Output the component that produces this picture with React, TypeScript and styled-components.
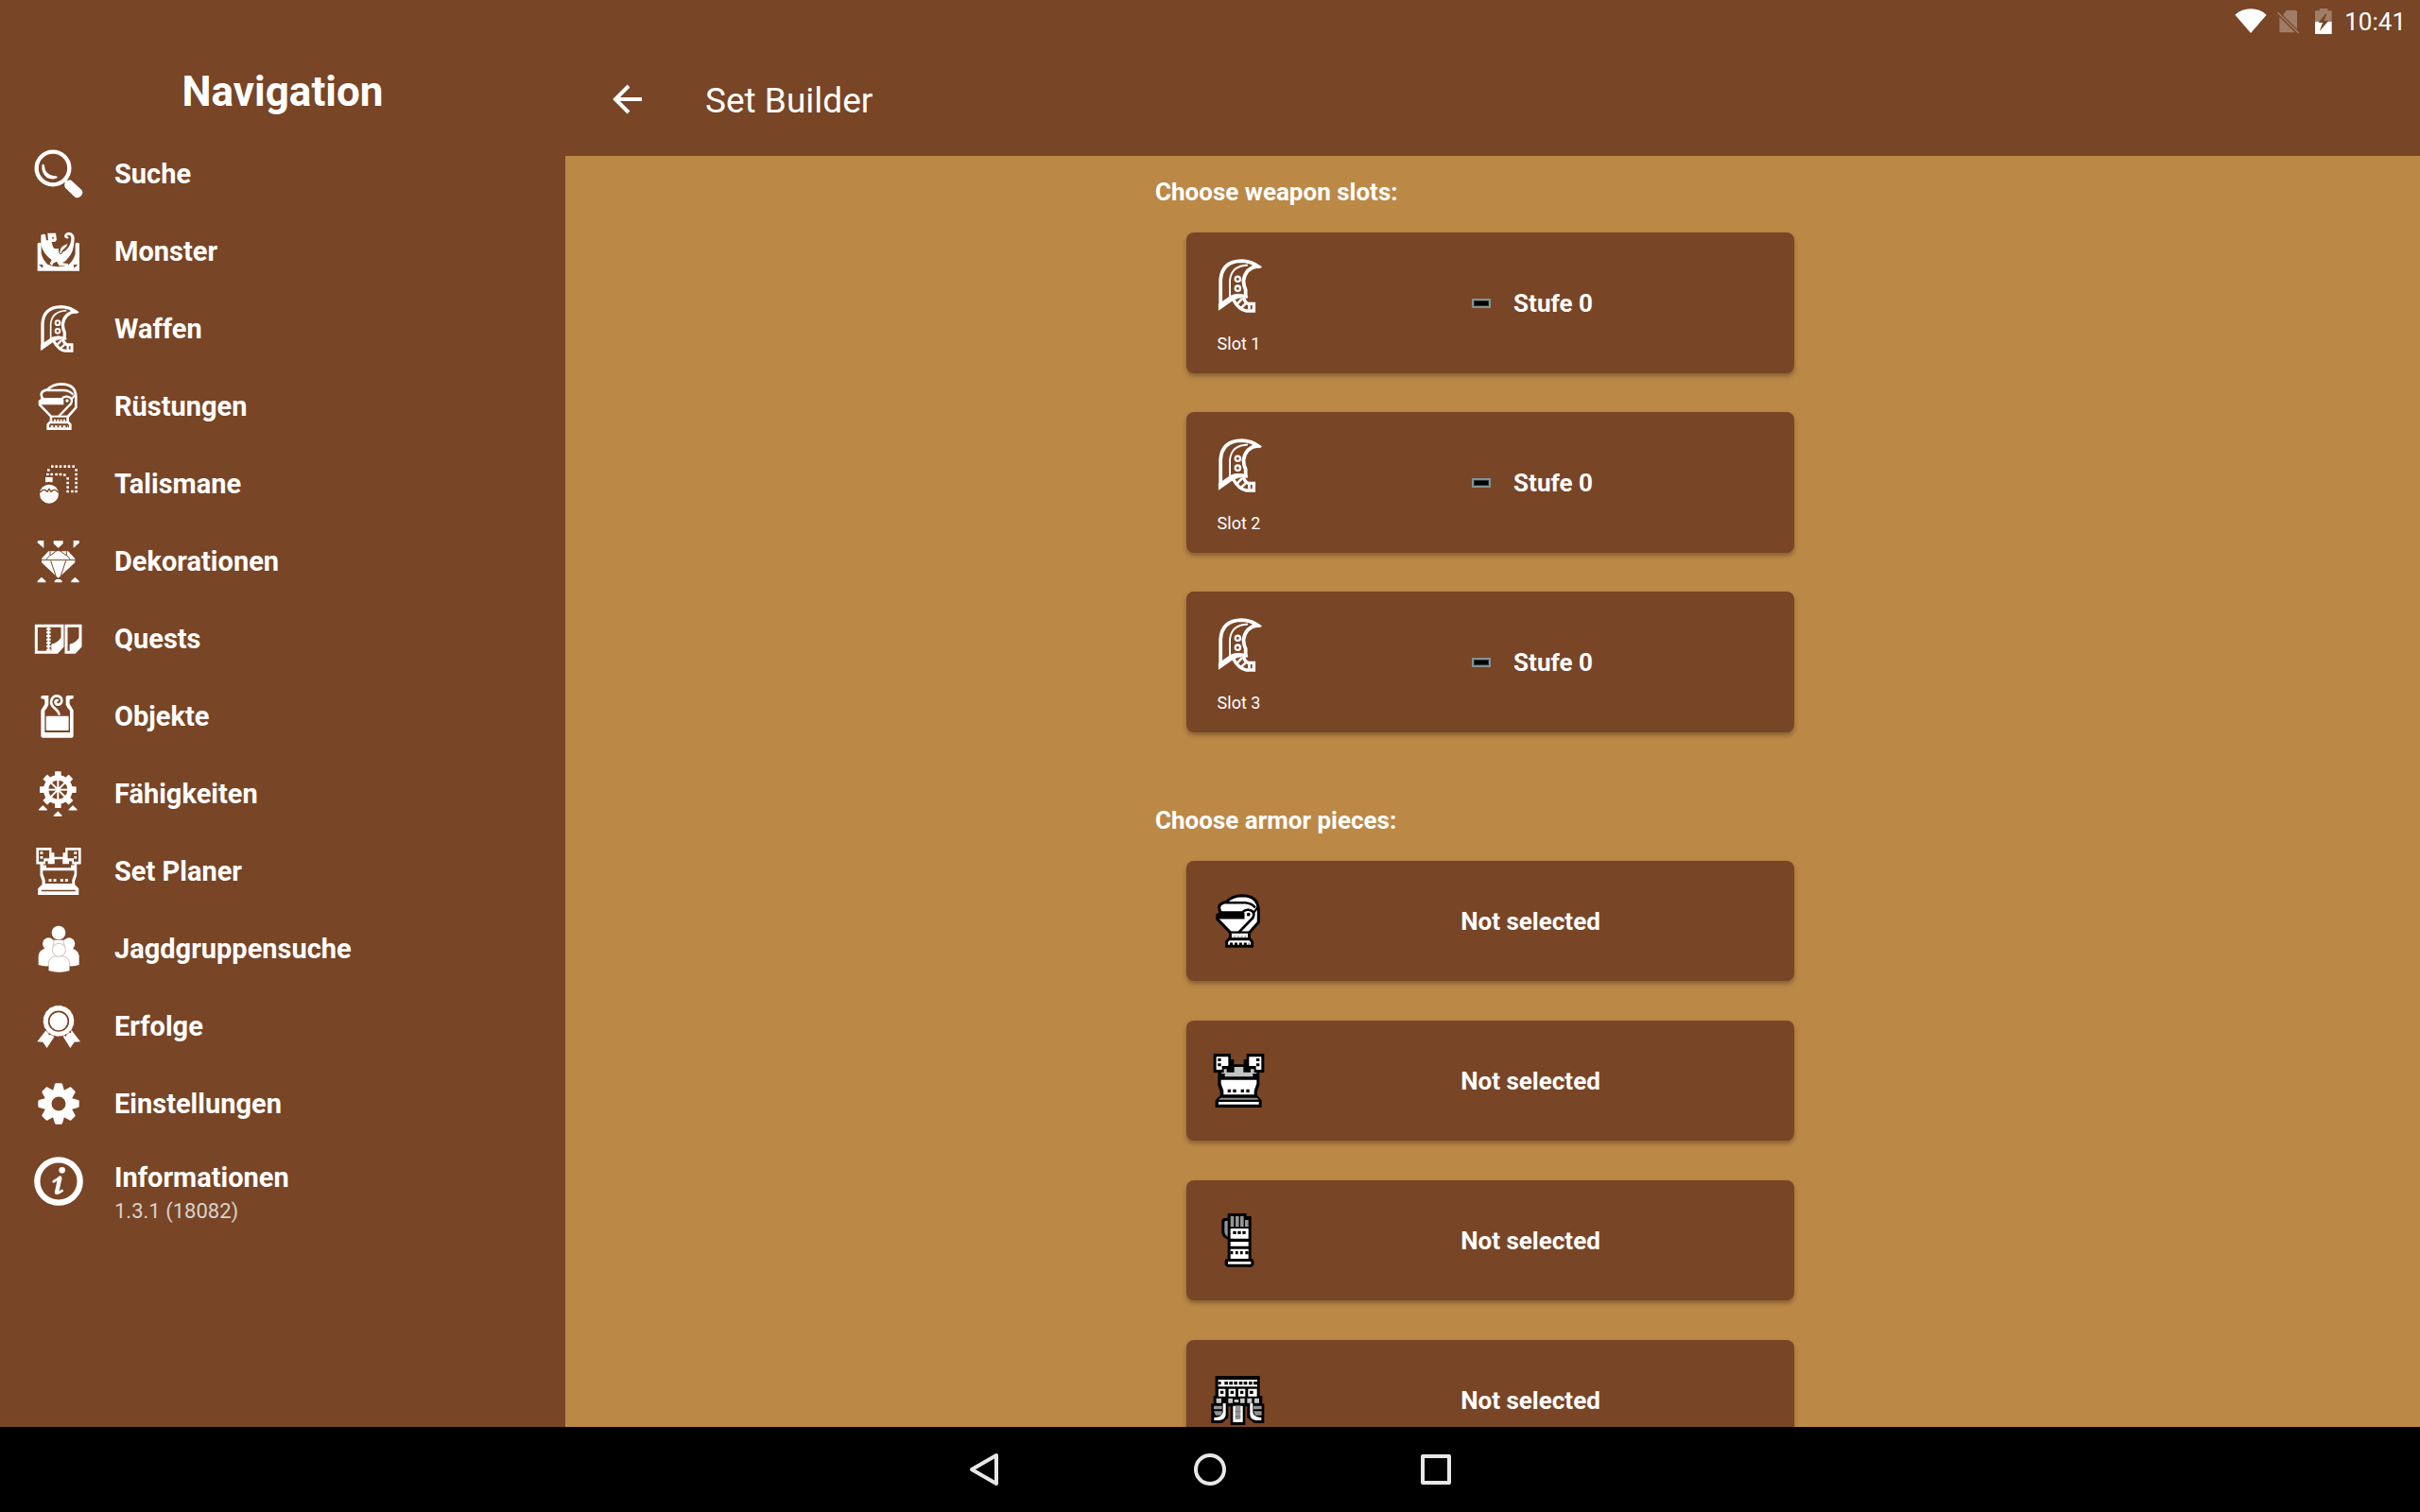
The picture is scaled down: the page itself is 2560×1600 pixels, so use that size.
import React from "react";
import styled, { createGlobalStyle } from "styled-components";

const BROWN = "#784526";
const GOLD = "#bc8846";

const GlobalStyle = createGlobalStyle`
  * { box-sizing: border-box; }
  body { margin: 0; background: ${BROWN}; font-family: Roboto, "Noto Sans", sans-serif; color: #fff; }
  button { font: inherit; color: inherit; border: 0; padding: 0; background: none; cursor: pointer; }
`;

const Screen = styled.div`
  display: flex;
  flex-direction: column;
  height: 100vh;
  background: ${BROWN};
`;

const StatusBar = styled.header`
  display: flex;
  flex: none;
  align-items: center;
  justify-content: flex-end;
  gap: 11px;
  height: 48px;
  padding: 0 15px 3px 0;
  font-size: 26px;
  line-height: 32px;

  svg { display: block; }
`;

const Body = styled.div`
  display: flex;
  flex: 1;
  min-height: 0;
`;

const Sidebar = styled.nav`
  flex: none;
  width: 598px;
`;

const SidebarTitle = styled.h1`
  margin: 0;
  padding-top: 3px;
  font-size: 44px;
  font-weight: 700;
  line-height: 92px;
  text-align: center;
`;

const MenuList = styled.ul`
  margin: 0;
  padding: 0;
  list-style: none;
`;

const MenuLink = styled.a`
  display: flex;
  align-items: center;
  gap: 33px;
  height: 82px;
  padding-left: 36px;
  color: #fff;
  text-decoration: none;
`;

const MenuText = styled.span<{ $top?: boolean }>`
  align-self: ${(p) => (p.$top ? "flex-start" : "center")};
  padding-top: ${(p) => (p.$top ? "19px" : "0")};
  font-size: 29px;
  font-weight: 700;
  line-height: 36px;
`;

const Version = styled.small`
  display: block;
  font-size: 22px;
  font-weight: 400;
  line-height: 36px;
  color: #d8d2ce;
`;

const Main = styled.main`
  display: flex;
  flex: 1;
  flex-direction: column;
  min-width: 0;
`;

const AppBar = styled.div`
  display: flex;
  flex: none;
  align-items: center;
  height: 117px;
  padding-left: 42px;
`;

const BackButton = styled.button`
  display: grid;
  place-items: center;
  width: 48px;
  height: 48px;
  margin-right: 58px;
`;

const AppTitle = styled.h2`
  margin: 0;
  font-size: 37px;
  font-weight: 400;
  line-height: 48px;
`;

const Content = styled.div`
  flex: 1;
  min-height: 0;
  overflow: hidden;
  background: ${GOLD};
`;

const Column = styled.div`
  display: flex;
  flex-direction: column;
  gap: 76px;
  width: 714px;
  margin: 0 auto;
  padding-top: 21px;
`;

const SectionTitle = styled.h3`
  margin: 0 0 26px;
  font-size: 26px;
  font-weight: 700;
  line-height: 34px;
`;

const CardList = styled.div<{ $gap: number }>`
  display: flex;
  flex-direction: column;
  gap: ${(p) => p.$gap}px;
  padding: 0 38px 0 33px;
`;

const Card = styled.button<{ $height: number }>`
  display: flex;
  align-items: center;
  height: ${(p) => p.$height}px;
  padding-left: 26px;
  border-radius: 8px;
  background: ${BROWN};
  box-shadow: 0 3px 5px rgba(0, 0, 0, 0.3);
`;

const CardIcon = styled.span`
  display: flex;
  flex: none;
  flex-direction: column;
  align-items: center;
  gap: 18px;
  width: 59px;

  svg { display: block; }
`;

const WeaponIcon = styled(CardIcon)`
  margin-right: 4px;
  padding-top: 10px;
`;

const SlotName = styled.span`
  font-size: 18px;
  line-height: 28px;
`;

const CardValue = styled.span`
  display: flex;
  flex: 1;
  align-items: center;
  justify-content: center;
  gap: 24px;
  font-size: 26px;
  font-weight: 700;
  line-height: 34px;
`;

const EmptySlot = styled.i`
  width: 20px;
  height: 10px;
  border: 2px solid #87918f;
  background: #000;
  box-shadow: inset 0 0 0 1px #27363a;
`;

const SystemBar = styled.footer`
  display: flex;
  flex: none;
  align-items: center;
  justify-content: center;
  gap: 159px;
  height: 90px;
  background: #000;
`;

const SystemButton = styled.button`
  display: grid;
  place-items: center;
  width: 80px;
  height: 80px;
`;

type IconProps = { size?: number; line?: string; fill?: string };

const SearchIcon = ({ size = 52 }: IconProps) => (
  <svg width={size} height={size} viewBox="109 354 156 156" fill="#fff">
    <circle cx="169" cy="414" r="52" fill="none" stroke="#fff" strokeWidth="13" />
    <path d="M134 405q4-7 8 0q1 31 36 34q10 3 1 7q-15 6-30-3q-17-13-15-38z" />
    <path d="M213 458l-10-10M226 470l21 22" stroke="#fff" strokeWidth="9" fill="none" />
    <path d="M206 464q0-6 7-11q8-3 14-1l33 31q7 9-1 18q-9 10-20 5l-31-30q-4-7-2-12z" />
  </svg>
);

const MonsterIcon = ({ size = 52 }: IconProps) => (
  <svg width={size} height={size} viewBox="109 600 156 156" fill="#fff">
    <path d="M120 653q6-5 12 0v32q4 20 20 34q34 15 68 0q16-14 20-34v-32q6-5 13 0v87H120z" />
    <path d="M124 720h13v11zM248 720h-13v11z" fill={BROWN} />
    <path d="M131 627q8-6 14-2l3 18h6l-2-23h26l3 22-6 6h-10l4 16q6 8 12 5h6q-2 12 6 13q20-4 30-26q6-16 3-26q-8-8-13 0q6 0 6 6q-12 4-14-6q2-12 14-13q16 2 18 16q0 44-18 64q-8 12-20 18l18 2v7h-28l-8-14-12 6-2 8-8-7 6-12q-26-18-34-48z" />
    <path d="M190 684q-2-18 14-26q8-5 14-6q-4 12-12 18q-8 4-10 16z" stroke={BROWN} strokeWidth="3" />
    <circle cx="169" cy="635" r="3" fill={BROWN} />
  </svg>
);

const BladeIcon = ({ size = 52 }: IconProps) => (
  <svg width={size} height={size} viewBox="109 846 156 156" fill="none" stroke="#fff">
    <path d="M136 983V908Q139 855 195 854Q222 855 240 869Q205 874 200 910Q201 926 206 935V955" strokeWidth="10" />
    <path d="M222 855L249 870 247 874H228z" fill="#fff" strokeWidth="2" />
    <path d="M162 956V908Q166 868 212 866" strokeWidth="5" />
    <path d="M131 992V975L166 951Q186 943 211 952V958Q190 953 172 963Z" fill="#fff" strokeWidth="2" />
    <path d="M171 962Q187 991 208 994H229V974H213Q203 970 200 956" strokeWidth="9" />
    <path d="M181 976L196 960M193 986L208 972M216 974V990" strokeWidth="7" />
    <circle cx="184" cy="905" r="7" strokeWidth="6" />
    <circle cx="184" cy="931" r="7" strokeWidth="6" />
  </svg>
);

const HelmIcon = ({ size = 52, line = "#fff", fill = BROWN }: IconProps) => (
  <svg width={size} height={size} viewBox="109 72 156 156" fill="none" stroke={line} strokeWidth="8">
    <path
      d="M127 134V145L163 182V202H216V183L242 154V118Q240 79 195 79Q168 80 151 97Q132 101 132 112Q132 120 137 127Z"
      fill={fill}
    />
    <path d="M150 99H205Q224 101 233 113" strokeWidth="7" />
    <path d="M131 123H198L203 129V145H127V133H131z" fill={line} stroke="none" />
    <path d="M198 125Q204 118 214 119Q229 121 229 133Q228 142 221 147L186 183" strokeWidth="7" />
    <path d="M228 128L240 112" strokeWidth="6" />
    <circle cx="214" cy="132" r="5" fill={line} stroke="none" />
    <path d="M165 182H216" strokeWidth="6" />
    <path d="M172 194H208" stroke={fill === "#fff" ? "#bbb" : line} strokeWidth="6" strokeDasharray="6 4" />
    <path d="M153 221V208L159 201H218L224 208V221Z" fill={fill} />
    <path d="M162 214H216" strokeWidth="7" strokeDasharray="8 5" />
  </svg>
);

const TALISMAN_BEADS = [
  [167, 341], [180, 341], [193, 341], [207, 341], [220, 341], [234, 341], [155, 352],
  [243, 352], [243, 366], [243, 380], [243, 393], [243, 407], [243, 420],
  [152, 366], [165, 366], [180, 366], [193, 366], [206, 368],
  [216, 379], [216, 393], [216, 407], [216, 420], [230, 420],
];

const TalismanIcon = ({ size = 52 }: IconProps) => (
  <svg width={size} height={size} viewBox="109 318 156 156" fill="#fff">
    {TALISMAN_BEADS.map(([x, y]) => (
      <rect key={`${x}-${y}`} x={x - 4} y={y - 4} width="8" height="8" rx="2" />
    ))}
    <path d="M145 375h23v16h-6q-5-4-10 0h-7z" />
    <circle cx="157" cy="428" r="30" />
    <path d="M128 424q8-12 16-8l7 5 6-9 6 9 7-5q8-4 16 8" fill="none" stroke={BROWN} strokeWidth="4" />
  </svg>
);

const GemIcon = ({ size = 52 }: IconProps) => (
  <svg width={size} height={size} viewBox="109 564 156 156" fill="#fff">
    <path d="M155 610H217L239 633V646L186 695L133 646V633Z" />
    <path
      d="M132 638H240M160 610V622L148 636M212 610V622L224 636M186 604L160 624M186 604L212 624M162 640L178 688M210 640L194 688"
      stroke={BROWN}
      strokeWidth="3"
      fill="none"
    />
    <path d="M171 577h30v9l-15 14-15-14zM120 578l4-2h16v24l-20-17zM253 578l-4-2h-15v24l19-17z" />
    <path d="M120 709v-5l13-12 13 12v5zM227 709v-5l12-12 13 12v5zM174 709v-5l6-5h12l6 5v5z" />
  </svg>
);

const QuestIcon = ({ size = 52 }: IconProps) => (
  <svg width={size} height={size} viewBox="109 810 156 156" fill="none" stroke="#fff" strokeWidth="9">
    <path d="M116 847H199V912L182 931H116ZM211 847H256V912L238 931H211Z" />
    <path d="M155 851V930" strokeWidth="6" />
    <path d="M155 854V930" strokeWidth="14" strokeDasharray="6 5" />
    <path d="M165 906Q185 902 199 880V912L182 931H165ZM223 906Q245 900 256 880V912L238 931H223Z" fill="#fff" strokeWidth="2" />
  </svg>
);

const BottleIcon = ({ size = 52 }: IconProps) => (
  <svg width={size} height={size} viewBox="109 96 156 156" fill="#fff">
    <path d="M131 111l4-3h20v29q-3 9-12 19v69h80v-69q-10-10-13-19v-25l4-4h20v9l-12 4v14l12 20v81q0 6-6 6h-91q-6 0-6-6v-81l12-20v-14l-12-4z" />
    <rect x="147" y="173" width="72" height="46" rx="3" />
    <path d="M188 170Q190 162 174 148Q161 138 164 124Q168 109 182 109Q197 111 197 125Q195 137 184 137Q175 134 177 126Q180 121 186 125" fill="none" stroke="#fff" strokeWidth="8" />
  </svg>
);

const SPOKES = [0, 45, 90, 135, 180, 225, 270, 315];

const SkillIcon = ({ size = 52 }: IconProps) => (
  <svg width={size} height={size} viewBox="109 342 156 156" fill="#fff">
    {SPOKES.map((a) => (
      <rect key={a} x="175" y="349" width="20" height="26" rx="2" transform={`rotate(${a} 185 407)`} />
    ))}
    <circle cx="185" cy="407" r="38" fill="none" stroke="#fff" strokeWidth="16" />
    {SPOKES.map((a) => (
      <rect key={a} x="182" y="374" width="6" height="30" transform={`rotate(${a} 185 407)`} />
    ))}
    <circle cx="185" cy="407" r="7" />
    <path d="M124 473v-4l13-13 14 13v4zM219 473v-4l13-13 14 13v4zM171 492v-4l14-13 13 13v4z" stroke={BROWN} />
  </svg>
);

const ChestIcon = ({ size = 52, line = "#fff", fill = BROWN }: IconProps) => {
  const shade = fill === "#fff" ? "#c4c4c4" : fill;
  return (
    <svg width={size} height={size} viewBox="97 642 177 177" fill={line}>
      <path d="M105 645H160V663H170V679H201V663H210V645H266V705H251V745L244 765V778L258 793V816H111V793L126 778V765L119 745V705H105Z" />
      <path d="M171 687H200V704H223V694H234V705H242V708H230V718H141V708H130V705H138V694H147V704H171Z" fill={shade} />
      <path d="M114 655H152V684H132V696H114ZM257 655H218V684H240V696H257Z" fill={fill} />
      <path d="M119 660h10v9h-10zM119 676h10v9h-10zM241 660h10v9h-10zM241 676h10v9h-10z" />
      <path d="M129 728H242V740L234 762V775H137V762L129 740Z" fill={fill} />
      <path d="M150 758h10v10h-10zM167 758h10v10h-10zM192 758h10v10h-10zM209 758h10v10h-10z" />
      <path d="M128 785H243L249 791H121Z" fill={fill === "#fff" ? "#8c8c8c" : line} />
      <path d={fill === "#fff" ? "M121 798H249V806H121Z" : "M124 798H246V803H124Z"} fill={fill} />
    </svg>
  );
};

const GroupIcon = ({ size = 52 }: IconProps) => (
  <svg width={size} height={size} viewBox="109 834 156 156" fill="#fff">
    <circle cx="187" cy="861" r="22" />
    <rect x="167" y="884" width="40" height="64" />
    <circle cx="155" cy="896" r="19" />
    <circle cx="220" cy="896" r="19" />
    <path d="M123 963V934Q125 914 150 910H224Q249 914 252 934V963Q240 968 220 967H156Q136 968 123 963Z" />
    <path d="M155 982V958Q158 936 180 935H196Q219 936 222 958V982Q190 992 155 982Z" stroke={BROWN} strokeWidth="1" />
    <circle cx="188" cy="916" r="21" stroke={BROWN} strokeWidth="1" />
    <path d="M171 880Q175 893 168 904M203 880Q200 893 207 904" stroke={BROWN} strokeWidth="1" fill="none" />
  </svg>
);

const AwardIcon = ({ size = 52 }: IconProps) => (
  <svg width={size} height={size} viewBox="109 90 156 156" fill="#fff">
    <path d="M149 178L119 217 137 218 150 237 174 200zM226 178L256 217 237 218 224 237 201 200z" />
    <circle cx="187" cy="151" r="50" stroke={BROWN} strokeWidth="2" />
    <circle cx="187" cy="151" r="51" fill="none" stroke={BROWN} strokeWidth="5" strokeDasharray="5 13" />
    <circle cx="187" cy="152" r="31" fill="none" stroke={BROWN} strokeWidth="5" />
  </svg>
);

const SettingsIcon = ({ size = 52 }: IconProps) => (
  <svg width={size} height={size} viewBox="109 336 156 156" fill="#fff">
    {SPOKES.map((a) => (
      <path key={a} d="M168 376L175 352Q176 349 179 349H195Q198 349 199 352L206 376Z" transform={`rotate(${a} 187 414)`} />
    ))}
    <circle cx="187" cy="414" r="34" fill="none" stroke="#fff" strokeWidth="23" />
  </svg>
);

const InfoIcon = ({ size = 52 }: IconProps) => (
  <svg width={size} height={size} viewBox="109 582 156 156" fill="none" stroke="#fff">
    <circle cx="187" cy="660" r="68" strokeWidth="19" />
    <circle cx="198" cy="625" r="10" fill="#fff" stroke="none" />
    <path d="M171 661L192 648Q186 672 180 698Q186 700 198 690" strokeWidth="8" strokeLinecap="round" strokeLinejoin="round" />
    <path d="M191 650L181 695" strokeWidth="13" strokeLinecap="round" />
  </svg>
);

const GauntletIcon = ({ size = 59 }: IconProps) => (
  <svg width={size} height={size} viewBox="97 126 177 177" fill="#000">
    <path d="M150 129H210V138H225V273H229L233 279V292L227 299H148L141 292V279L146 273H150V212Q131 204 131 190V150L137 144H150Z" />
    <path d="M140 155Q142 152 150 152V203Q140 197 140 186ZM159 138h11v34h-11zM175 138h11v34h-11zM190 138h11v34h-11zM205 150h11v22h-11z" fill="#949494" />
    <path d="M159 177H216V209H159ZM159 219H216V233H159ZM159 242H216V273H159ZM151 282H224V290H151Z" fill="#fff" />
    <path d="M167 185h10v10h-10zM182 185h10v10h-10zM197 185h10v10h-10zM159 249h8v10h-8zM175 249h8v10h-8zM190 249h8v10h-8zM206 249h10v10h-10z" />
  </svg>
);

const WaistIcon = ({ size = 59 }: IconProps) => (
  <svg width={size} height={size} viewBox="97 633 177 177" fill="#000">
    <path d="M111 645H252V708H260V733H266V795H235L212 778V742H206V801H159V742H152V778L132 795H98V733H105V708H111Z" />
    <path d="M120 657H244V679H120ZM121 686h22v24h-22zM153 686h22v24h-22zM184 686h22v24h-22zM215 686h28v24h-28z" fill="#fff" />
    <path d="M120 663h9v9h-9zM140 663h11v10h-11zM155 663h11v10h-11zM170 663h11v10h-11zM186 663h11v10h-11zM201 663h11v10h-11zM217 663h11v10h-11zM232 663h12v10h-12z" />
    <path d="M127 692h10v10h-10zM159 692h10v10h-10zM190 692h10v10h-10zM220 692h11v10h-11z" />
    <path d="M114 716h16v15h-16zM152 716h14v15h-14zM171 720h14v9h-14zM190 716h14v15h-14zM212 716h15v15h-15zM235 716h15v15h-15z" fill="#c8c8c8" />
    <path d="M106 740h26v11h-26zM106 757h26v13h-20zM232 740h26v11h-26zM232 757h26v13h-20z" fill="#949494" />
    <path d="M135 732H144V768Q142 784 124 786H107V777Q132 778 135 760ZM221 732H230V760Q232 776 257 777V786H240Q222 784 221 768ZM167 740H198V792H167Z" fill="#fff" />
    <path d="M174 740H191V783H174Z" fill="#949494" />
    <path d="M174 756h17v4h-17zM174 772h17v4h-17z" fill="#777" />
  </svg>
);

const MENU = [
  { label: "Suche", Icon: SearchIcon },
  { label: "Monster", Icon: MonsterIcon },
  { label: "Waffen", Icon: BladeIcon },
  { label: "Rüstungen", Icon: HelmIcon },
  { label: "Talismane", Icon: TalismanIcon },
  { label: "Dekorationen", Icon: GemIcon },
  { label: "Quests", Icon: QuestIcon },
  { label: "Objekte", Icon: BottleIcon },
  { label: "Fähigkeiten", Icon: SkillIcon },
  { label: "Set Planer", Icon: ChestIcon },
  { label: "Jagdgruppensuche", Icon: GroupIcon },
  { label: "Erfolge", Icon: AwardIcon },
  { label: "Einstellungen", Icon: SettingsIcon },
  { label: "Informationen", Icon: InfoIcon, version: "1.3.1 (18082)" },
];

const WEAPON_SLOTS = ["Slot 1", "Slot 2", "Slot 3"];

const ARMOR_PIECES = [
  { id: "head", Icon: HelmIcon },
  { id: "chest", Icon: ChestIcon },
  { id: "arms", Icon: GauntletIcon },
  { id: "waist", Icon: WaistIcon },
];

export default function App() {
  return (
    <Screen>
      <GlobalStyle />
      <StatusBar>
        <svg width="34" height="27" viewBox="69 27 102 81" fill="#fff">
          <path d="M70 47Q92 28 120 28T170 47L120 105Z" />
        </svg>
        <svg width="29" height="27" viewBox="204 27 87 81">
          <path d="M233 33H262Q267 33 267 38V92L222 48ZM211 54L260 103H216Q211 103 211 98Z" fill="#a17d68" />
          <path d="M205 39L272 105" stroke="#a17d68" strokeWidth="5" />
        </svg>
        <svg width="20" height="27" viewBox="325 27 60 81">
          <path d="M325 34H339V27H365V34H378V70H325Z" fill="#fff" opacity="0.3" />
          <path d="M325 69H378V108H325Z" fill="#fff" />
          <path d="M358 44L336 72H349L339 99L368 66H353L362 45Z" fill={BROWN} />
        </svg>
        <time>10:41</time>
      </StatusBar>
      <Body>
        <Sidebar>
          <SidebarTitle>Navigation</SidebarTitle>
          <MenuList>
            {MENU.map(({ label, Icon, version }) => (
              <li key={label}>
                <MenuLink href="#">
                  <Icon />
                  <MenuText $top={Boolean(version)}>
                    {label}
                    {version && <Version>{version}</Version>}
                  </MenuText>
                </MenuLink>
              </li>
            ))}
          </MenuList>
        </Sidebar>
        <Main>
          <AppBar>
            <BackButton aria-label="Back">
              <svg width="32" height="36" viewBox="0 0 32 36" fill="none" stroke="#fff" strokeWidth="4">
                <path d="M31 16H4M17 2L3 16L17 30" />
              </svg>
            </BackButton>
            <AppTitle>Set Builder</AppTitle>
          </AppBar>
          <Content>
            <Column>
              <section>
                <SectionTitle>Choose weapon slots:</SectionTitle>
                <CardList $gap={41}>
                  {WEAPON_SLOTS.map((name) => (
                    <Card key={name} $height={149}>
                      <WeaponIcon>
                        <BladeIcon size={59} />
                        <SlotName>{name}</SlotName>
                      </WeaponIcon>
                      <CardValue>
                        <EmptySlot />
                        Stufe 0
                      </CardValue>
                    </Card>
                  ))}
                </CardList>
              </section>
              <section>
                <SectionTitle>Choose armor pieces:</SectionTitle>
                <CardList $gap={42}>
                  {ARMOR_PIECES.map(({ id, Icon }) => (
                    <Card key={id} $height={127}>
                      <CardIcon>
                        <Icon size={59} line="#000" fill="#fff" />
                      </CardIcon>
                      <CardValue>Not selected</CardValue>
                    </Card>
                  ))}
                </CardList>
              </section>
            </Column>
          </Content>
        </Main>
      </Body>
      <SystemBar>
        <SystemButton aria-label="Back">
          <svg width="36" height="36" viewBox="0 0 36 36" fill="none" stroke="#e8e8e8" strokeWidth="4" strokeLinejoin="round">
            <path d="M31 3V33L5 18Z" />
          </svg>
        </SystemButton>
        <SystemButton aria-label="Home">
          <svg width="36" height="36" viewBox="0 0 36 36" fill="none" stroke="#e8e8e8" strokeWidth="4">
            <circle cx="18" cy="18" r="15" />
          </svg>
        </SystemButton>
        <SystemButton aria-label="Overview">
          <svg width="36" height="36" viewBox="0 0 36 36" fill="none" stroke="#e8e8e8" strokeWidth="4" strokeLinejoin="round">
            <rect x="4" y="4" width="28" height="28" />
          </svg>
        </SystemButton>
      </SystemBar>
    </Screen>
  );
}
